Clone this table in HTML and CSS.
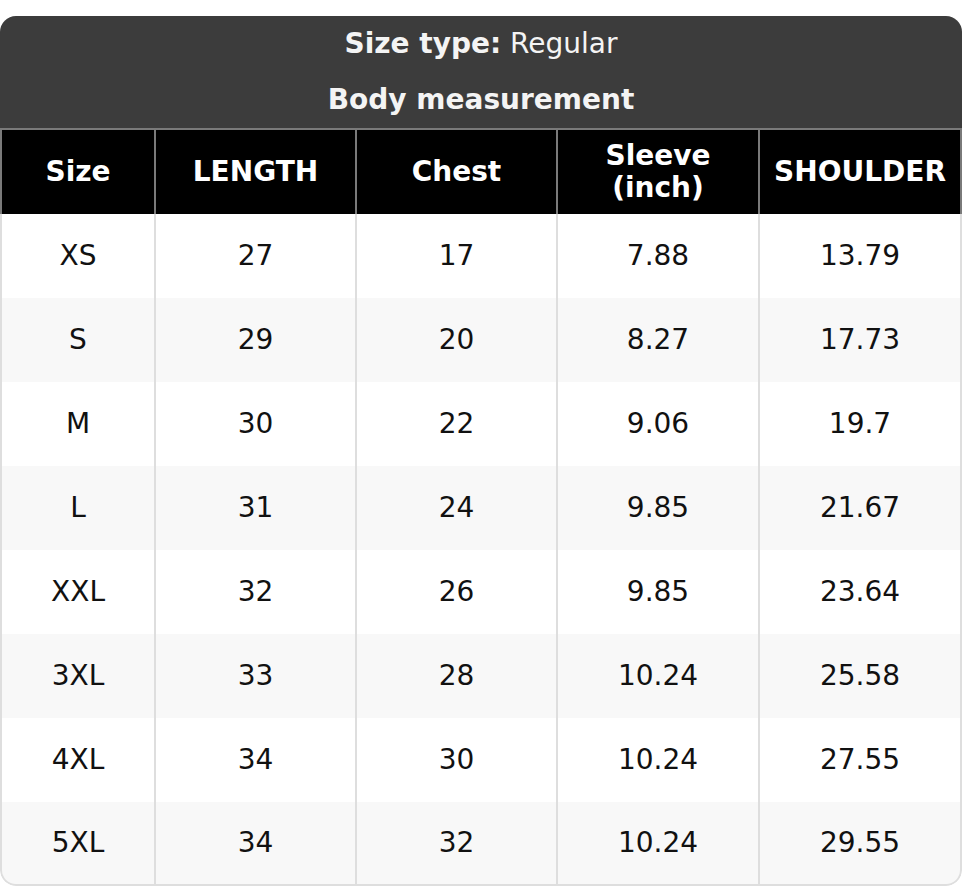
FILE: index.html
```html
<!DOCTYPE html>
<html lang="en">
<head>
<meta charset="utf-8">
<title>Size chart</title>
<link rel="stylesheet" href="styles.css">
</head>
<body>
<div class="chart">
  <div class="chart-head">
    <div class="chart-line"><strong>Size type:</strong> Regular</div>
    <div class="chart-line"><strong>Body measurement</strong></div>
  </div>
  <table class="size-table">
    <colgroup>
      <col class="c1"><col class="c2"><col class="c3"><col class="c4"><col class="c5">
    </colgroup>
    <thead>
      <tr><th>Size</th><th>LENGTH</th><th>Chest</th><th>Sleeve<br>(inch)</th><th>SHOULDER</th></tr>
    </thead>
    <tbody>
      <tr><td>XS</td><td>27</td><td>17</td><td>7.88</td><td>13.79</td></tr>
      <tr><td>S</td><td>29</td><td>20</td><td>8.27</td><td>17.73</td></tr>
      <tr><td>M</td><td>30</td><td>22</td><td>9.06</td><td>19.7</td></tr>
      <tr><td>L</td><td>31</td><td>24</td><td>9.85</td><td>21.67</td></tr>
      <tr><td>XXL</td><td>32</td><td>26</td><td>9.85</td><td>23.64</td></tr>
      <tr><td>3XL</td><td>33</td><td>28</td><td>10.24</td><td>25.58</td></tr>
      <tr><td>4XL</td><td>34</td><td>30</td><td>10.24</td><td>27.55</td></tr>
      <tr><td>5XL</td><td>34</td><td>32</td><td>10.24</td><td>29.55</td></tr>
    </tbody>
  </table>
</div>
</body>
</html>
```
FILE: styles.css
```css
html, body {
  margin: 0;
  padding: 0;
  background: #ffffff;
}
body {
  padding-top: 16px;
  font-family: "DejaVu Sans", Verdana, sans-serif;
  font-size: 28px;
}
.chart {
  width: 962px;
  border-radius: 16px;
  overflow: hidden;
  background: #ffffff;
}
.chart-head {
  background: #3c3c3c;
  color: #f4f4f4;
  text-align: center;
  border-bottom: 2px solid #7a7a7a;
}
.chart-line {
  height: 56px;
  line-height: 56px;
}
.chart-line strong {
  font-weight: bold;
}
.size-table {
  width: 962px;
  table-layout: fixed;
  border-collapse: separate;
  border-spacing: 0;
}
.c1 { width: 156px; }
.c2 { width: 201px; }
.c3 { width: 201px; }
.c4 { width: 202px; }
.c5 { width: 202px; }
.size-table th,
.size-table td {
  box-sizing: border-box;
  padding: 0;
  text-align: center;
  vertical-align: middle;
  height: 84px;
  line-height: 32px;
}
.size-table th {
  background: #000000;
  color: #ffffff;
  font-weight: bold;
  border-right: 2px solid #7a7a7a;
}
.size-table th:first-child {
  border-left: 2px solid #7a7a7a;
}
.size-table td {
  color: #111111;
  font-weight: normal;
  border-right: 2px solid #dedede;
}
.size-table td:first-child {
  border-left: 2px solid #dedede;
}
.size-table tbody tr:nth-child(even) td {
  background: #f8f8f8;
}
.size-table tbody tr:last-child td {
  border-bottom: 2px solid #dedede;
}
.size-table tbody tr:last-child td:first-child {
  border-bottom-left-radius: 16px;
}
.size-table tbody tr:last-child td:last-child {
  border-bottom-right-radius: 16px;
}
```
